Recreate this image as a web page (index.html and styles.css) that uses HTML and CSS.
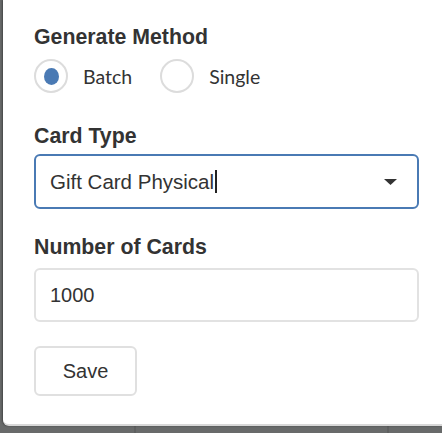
FILE: index.html
```html
<!DOCTYPE html>
<html>
<head>
<meta charset="utf-8">
<link rel="stylesheet" href="styles.css">
</head>
<body>
<div class="backdrop">
  <div class="modal">
    <div class="field field-method">
      <div class="label">Generate Method</div>
      <div class="radios">
        <div class="radio-opt">
          <span class="radio checked"><span class="dot"></span></span>
          <span class="radio-text">Batch</span>
        </div>
        <div class="radio-opt">
          <span class="radio"></span>
          <span class="radio-text">Single</span>
        </div>
      </div>
    </div>
    <div class="field field-type">
      <div class="label">Card Type</div>
      <div class="select">
        <span class="select-text">Gift Card Physical<span class="caret"></span></span>
        <svg class="arrow" width="13" height="6" viewBox="0 0 13 6"><path d="M0 0H13L6.5 6Z" fill="#333"/></svg>
      </div>
    </div>
    <div class="field field-count">
      <div class="label">Number of Cards</div>
      <div class="input">1000</div>
    </div>
    <div class="actions">
      <button class="btn">Save</button>
    </div>
  </div>
</div>
</body>
</html>
```
FILE: styles.css
```css
html, body {
  margin: 0;
  padding: 0;
  background: #666868;
}
.backdrop {
  width: 442px;
  height: 433px;
  overflow: hidden;
  background:
    linear-gradient(#5e6060, #5e6060) 134px 0 / 2px 100% no-repeat,
    linear-gradient(#5e6060, #5e6060) 387px 0 / 2px 100% no-repeat,
    #686a6a;
}
.modal {
  margin-left: 3px;
  height: 426px;
  background: #fff;
  border-bottom: 2px solid #d8d8d8;
  border-bottom-left-radius: 6px;
  box-shadow: -1px 0 2px rgba(0,0,0,0.35);
  padding: 26px 23px 0 31px;
  box-sizing: border-box;
  display: flex;
  flex-direction: column;
  font-family: "Liberation Sans", Arial, sans-serif;
  color: #333;
}
.label {
  font-weight: bold;
  font-size: 21.3px;
  line-height: 22px;
  color: #333;
}
.field-method {
  margin-bottom: 32px;
}
.field-type {
  margin-bottom: 27px;
}
.field-count {
  margin-bottom: 24px;
}
.radios {
  display: flex;
  gap: 28px;
  margin-top: 11px;
}
.radio-opt {
  display: flex;
  align-items: center;
  gap: 15px;
}
.radio {
  width: 34px;
  height: 34px;
  box-sizing: border-box;
  border: 2px solid #dcdcdc;
  border-radius: 50%;
  display: flex;
  align-items: center;
  justify-content: center;
}
.dot {
  width: 15px;
  height: 17px;
  border-radius: 50%;
  background: #4a7ab4;
}
.radio-text {
  font-family: Lato, "Open Sans", sans-serif;
  font-size: 19.5px;
  color: #333;
}
.select {
  margin-top: 7px;
  height: 55px;
  box-sizing: border-box;
  border: 2px solid #4a7ab4;
  border-radius: 6px;
  display: flex;
  align-items: center;
  justify-content: space-between;
  padding: 0 20px 0 14px;
  font-size: 20.5px;
}
.select-text {
  display: flex;
  align-items: center;
}
.caret {
  display: inline-block;
  width: 2px;
  height: 23px;
  background: #222;
  margin-left: 1px;
}
.arrow {
  display: block;
}
.input {
  margin-top: 10px;
  height: 54px;
  box-sizing: border-box;
  border: 2px solid #e2e2e2;
  border-radius: 6px;
  display: flex;
  align-items: center;
  padding: 0 14px;
  font-size: 20px;
}
.btn {
  width: 103px;
  height: 50px;
  box-sizing: border-box;
  background: #fff;
  border: 2px solid #e0e0e0;
  border-radius: 6px;
  font-family: "Liberation Sans", Arial, sans-serif;
  font-size: 20px;
  color: #333;
  padding: 0;
}
```
